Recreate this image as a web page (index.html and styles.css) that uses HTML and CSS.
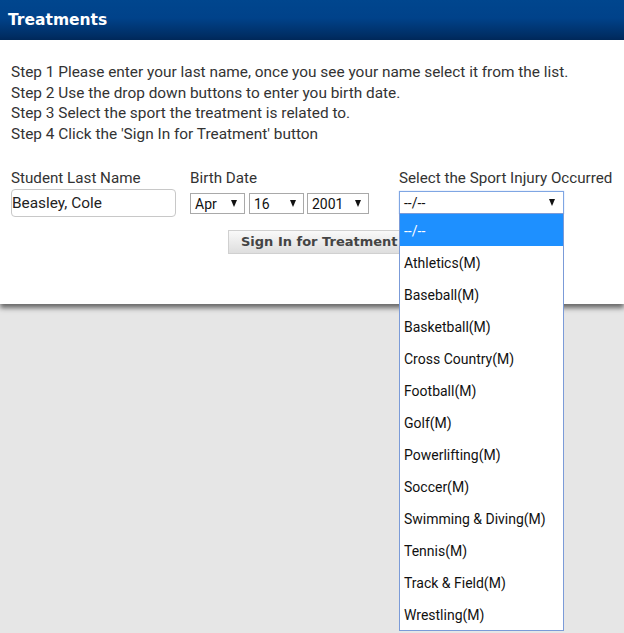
FILE: index.html
```html
<!DOCTYPE html>
<html>
<head>
<meta charset="utf-8">
<link rel="stylesheet" href="styles.css">
</head>
<body>
<div class="header"><h1 class="title">Treatments</h1></div>
<div class="card">
  <div class="steps">
    <div>Step 1 Please enter your last name, once you see your name select it from the list.</div>
    <div>Step 2 Use the drop down buttons to enter you birth date.</div>
    <div>Step 3 Select the sport the treatment is related to.</div>
    <div>Step 4 Click the 'Sign In for Treatment' button</div>
  </div>
  <div class="fields">
    <div class="col col-name">
      <div class="label">Student Last Name</div>
      <div class="input">Beasley, Cole</div>
    </div>
    <div class="col col-date">
      <div class="label">Birth Date</div>
      <div class="date-row">
        <div class="sel sel-mon"><span>Apr</span><i class="arrow"></i></div>
        <div class="sel sel-day"><span>16</span><i class="arrow"></i></div>
        <div class="sel sel-year"><span>2001</span><i class="arrow"></i></div>
      </div>
    </div>
    <div class="col col-sport">
      <div class="label">Select the Sport Injury Occurred</div>
      <div class="sport-wrap">
        <div class="sel sel-sport"><span>--/--</span><i class="arrow"></i></div>
        <ul class="list">
          <li class="active">--/--</li>
          <li>Athletics(M)</li>
          <li>Baseball(M)</li>
          <li>Basketball(M)</li>
          <li>Cross Country(M)</li>
          <li>Football(M)</li>
          <li>Golf(M)</li>
          <li>Powerlifting(M)</li>
          <li>Soccer(M)</li>
          <li>Swimming &amp; Diving(M)</li>
          <li>Tennis(M)</li>
          <li>Track &amp; Field(M)</li>
          <li>Wrestling(M)</li>
        </ul>
      </div>
    </div>
  </div>
  <div class="btn-row"><button class="btn">Sign In for Treatment</button></div>
</div>
</body>
</html>
```

FILE: styles.css
```css
html, body {
  margin: 0;
  padding: 0;
}
body {
  background: #e6e6e6;
  font-family: Roboto, "Liberation Sans", sans-serif;
  color: #333;
  height: 633px;
  overflow: hidden;
}
.header {
  height: 40px;
  background: linear-gradient(#00468e 0%, #00428a 45%, #00295b 100%);
  display: flex;
  align-items: center;
  padding-left: 8px;
}
.title {
  margin: 0;
  font-family: "DejaVu Sans", Verdana, sans-serif;
  font-weight: bold;
  font-size: 15.5px;
  color: #fff;
  padding-bottom: 1px;
}
.card {
  background: #fff;
  padding: 22px 11px 50px 11px;
  box-shadow: 0 4px 5px rgba(0, 0, 0, 0.55);
  position: relative;
  z-index: 1;
}
.steps {
  font-size: 15.4px;
  line-height: 20.67px;
}
.fields {
  display: flex;
  margin-top: 23px;
}
.label {
  font-size: 15.2px;
  line-height: 20.67px;
}
.col-name {
  width: 165px;
  margin-right: 14px;
}
.col-date {
  width: 209px;
}
.input {
  margin-top: 1px;
  height: 26px;
  border: 1px solid #c8c8c8;
  border-radius: 4px;
  font-size: 15.4px;
  line-height: 26px;
  padding-left: 0;
  color: #222;
}
.date-row {
  display: flex;
  margin-top: 5px;
}
.sel {
  box-sizing: border-box;
  height: 21px;
  border: 1px solid #a9a9a9;
  display: flex;
  align-items: center;
  justify-content: space-between;
  padding: 0 7px 0 4px;
  font-size: 14px;
  color: #111;
  background: #fff;
}
.sel-mon { width: 55px; margin-right: 4px; }
.sel-day { width: 55px; margin-right: 3px; }
.sel-year { width: 62px; }
.arrow {
  width: 0;
  height: 0;
  border-left: 3.5px solid transparent;
  border-right: 3.5px solid transparent;
  border-top: 7px solid #111;
}
.sport-wrap {
  position: relative;
  margin-top: 3px;
  width: 165px;
}
.sel-sport {
  height: 23px;
  border: 1px solid #7fa6e3;
  box-shadow: 0 0 1px #9fbff0;
  padding-right: 8px;
}
.list {
  position: absolute;
  left: 0;
  top: 22px;
  width: 165px;
  box-sizing: border-box;
  margin: 0;
  padding: 0;
  list-style: none;
  border: 1px solid #7b9bd8;
  background: #fff;
  z-index: 5;
}
.list li {
  height: 32px;
  box-sizing: border-box;
  padding-top: 3px;
  line-height: 29px;
  padding-left: 4px;
  font-size: 14px;
  color: #111;
  white-space: nowrap;
}
.list li.active {
  background: #1e90ff;
  color: #fff;
}
.btn-row {
  display: flex;
  padding-left: 217px;
  margin-top: 13px;
}
.btn {
  height: 24px;
  padding: 0 12px;
  border: 1px solid #d0d0d0;
  background: linear-gradient(#f9f9f9, #dedede);
  font-family: "DejaVu Sans", Verdana, sans-serif;
  font-weight: bold;
  font-size: 13px;
  color: #444;
  line-height: 22px;
}
```
